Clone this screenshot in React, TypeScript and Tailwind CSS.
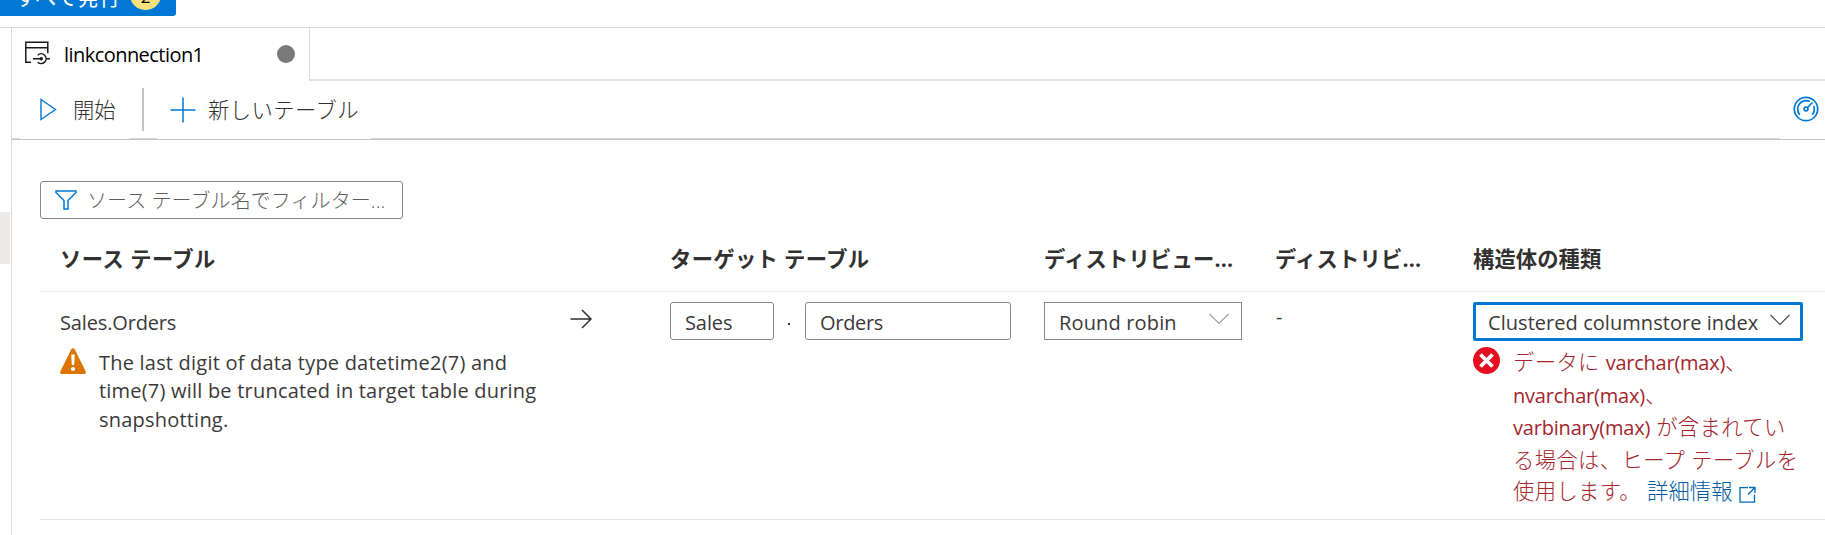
import React from 'react';

const Chevron = ({ className }: { className: string }) => (
  <svg viewBox="0 0 20 12" className={className} fill="none" stroke="currentColor" strokeWidth="1.1">
    <path d="M0.5 1 L10 10.5 L19.5 1" />
  </svg>
);

export default function App() {
  return (
    <div className="flex h-[535px] w-[1825px] flex-col overflow-hidden bg-white font-['Open_Sans','Noto_Sans_CJK_JP',sans-serif] text-[21.3px] text-[#323130]">
      <div className="flex h-[28px] shrink-0 items-end border-b border-[#d9d9d9] pb-[11px]">
        <div className="flex h-[43px] w-[176px] shrink-0 items-center rounded-br-[3px] bg-[#0078d4] pl-[15px] text-white">
          <span className="w-[115px] whitespace-nowrap pt-[5px] text-[21.3px] leading-[30px] tracking-[0.3px]">すべて発行</span>
          <span className="flex h-[30px] w-[31px] items-center justify-center rounded-full bg-[#f9e27d] pt-[4px] text-[17px] text-black">2</span>
        </div>
      </div>
      <div className="flex min-h-0 flex-1">
        <div className="w-[10px] shrink-0 pt-[184px]">
          <div className="h-[52px] bg-[#ebeae9]" />
        </div>
        <div className="ml-[1px] flex min-w-0 flex-1 flex-col border-l border-[#d9d9d9]">
          <div className="flex h-[53px] shrink-0">
            <div className="flex w-[298px] shrink-0 items-center border-r border-[#dcdcdc] pl-[13px]">
              <svg className="mb-[3px]" width="25" height="24" viewBox="0 0 25 24" fill="none" stroke="#1b1a19" strokeWidth="1.5">
                <path d="M6 21.300H.8V1.200h22v11M.8 6.700h22" />
                <path d="M8 17.700h8M12.700 14.200a4.900 4.900 0 1 1 0 7M21 17.700h4" />
                <circle cx="16.2" cy="17.7" r="1.8" fill="#1b1a19" stroke="none" />
              </svg>
              <span className="ml-[14px] w-[213px] whitespace-nowrap pt-[1px] text-[20px] font-medium tracking-[-0.55px] text-black">linkconnection1</span>
              <span className="mb-[1px] size-[18px] rounded-full bg-[#7a7a7a]" />
            </div>
            <div className="flex-1 border-b-2 border-[#e1e1e1]" />
          </div>
          <div className="flex h-[57px] shrink-0 items-center">
            <svg className="ml-[28px]" width="17" height="23" viewBox="0 0 17 23" fill="none" stroke="#0078d4" strokeWidth="1.4">
              <path d="M1 1.500 L15.500 11.500 L1 21.500Z" />
            </svg>
            <span className="ml-[16px] w-[69px] whitespace-nowrap pt-[1px] font-light">開始</span>
            <span className="mb-[1px] h-[43px] w-[2px] bg-[#c3c3c3]" />
            <svg className="ml-[26px]" width="26" height="26" viewBox="0 0 26 26" fill="none" stroke="#0078d4" strokeWidth="1.5">
              <path d="M13 .5v25M.5 13h25" />
            </svg>
            <span className="ml-[12px] flex-1 whitespace-nowrap pt-[1px] font-light tracking-[0.45px]">新しいテーブル</span>
            <svg className="mb-[1px] mr-[6px]" width="26" height="26" viewBox="0 0 26 26" fill="none" stroke="#0078d4" strokeWidth="1.7">
              <circle cx="13" cy="13" r="11.7" />
              <path d="M6.800 18.600a8.300 8.300 0 0 1 9.900-13M20.700 10a8.300 8.300 0 0 1-1.500 8.600M14.500 11.500l5-5" />
              <circle cx="13" cy="13" r="1.9" />
            </svg>
          </div>
          <div className="flex h-[2px] shrink-0 border-b border-[#c3c3c3]">
            <span className="w-[8px] bg-[#d6d6d6]" />
            <span className="ml-[109px] w-[28px] bg-[#d6d6d6]" />
            <span className="ml-[214px] mr-[45px] flex-1 bg-[#d6d6d6]" />
          </div>
          <div className="flex-1 pl-[28px] pt-[41px]">
            <div className="flex h-[38px] w-[363px] items-center rounded-[3px] border border-[#8a8886] pl-[14px]">
              <svg width="22" height="20" viewBox="0 0 22 20" fill="none" stroke="#0078d4" strokeWidth="1.5">
                <path d="M1 1h20v1.500l-8 8V19H9v-8.500L1 2.500Z" />
              </svg>
              <span className="ml-[10px] whitespace-nowrap pt-[2px] text-[20px] font-light tracking-[0.08px] text-[#605e5c]">ソース テーブル名でフィルター...</span>
            </div>
            <div className="grid h-[73px] grid-cols-[610px_374px_231px_198px_1fr] items-center border-b border-[#edebe9] pl-[20px] pt-[8px] font-bold whitespace-nowrap">
              <span className="tracking-[0.45px]">ソース テーブル</span>
              <span className="tracking-[0.35px]">ターゲット テーブル</span>
              <span className="tracking-[0.2px]">ディストリビュー...</span>
              <span className="tracking-[0.2px]">ディストリビ...</span>
              <span className="tracking-[0.1px]">構造体の種類</span>
            </div>
            <div className="grid h-[228px] grid-cols-[510px_100px_374px_231px_198px_1fr] border-b border-[#e5e5e5] pl-[20px] text-[20px] text-[#3b3a39]">
              <div className="pt-[17px]">
                <div className="leading-[28px] tracking-[-0.15px]">Sales.Orders</div>
                <div className="mt-[11px] flex">
                  <svg width="26" height="26" viewBox="0 0 26 26" className="mr-[13px] shrink-0">
                    <path d="M11.300 1.200Q13-.8 14.700 1.200L25.700 23.500Q26.400 26 24 26H2Q-.4 26 .3 23.500Z" fill="#db7500" />
                    <path d="M11.200 6.500h3.600l-.6 10.500h-2.400Z" fill="#fff" />
                    <circle cx="13" cy="21" r="2.100" fill="#fff" />
                  </svg>
                  <div className="whitespace-nowrap pt-[1px] leading-[28.3px] tracking-[0.21px]">
                    The last digit of data type datetime2(7) and<br />
                    time(7) will be truncated in target table during<br />
                    snapshotting.
                  </div>
                </div>
              </div>
              <svg className="mt-[17px]" width="23" height="20" viewBox="0 0 23 20" fill="none" stroke="#323130" strokeWidth="1.5">
                <path d="M.5 10h20.500M12 1l9 9-9 9" />
              </svg>
              <div className="flex pt-[10px]">
                <div className="flex h-[38px] w-[104px] items-center rounded-[3px] border border-[#8a8886] pl-[14px] pt-[3px] tracking-[-0.1px]">Sales</div>
                <span className="flex w-[31px] justify-center pr-[1px] pt-[21px]"><i className="size-[2px] bg-[#323130]" /></span>
                <div className="flex h-[38px] w-[206px] items-center rounded-[3px] border border-[#8a8886] pl-[14px] pt-[3px] tracking-[-0.3px]">Orders</div>
              </div>
              <div className="pt-[10px]">
                <div className="flex h-[38px] w-[198px] items-center border border-[#8a8886] pl-[14px] pt-[3px]">
                  <span className="w-[150px] whitespace-nowrap tracking-[0.15px]">Round robin</span>
                  <Chevron className="mb-[7px] h-[12px] w-[20px] text-[#a19f9d]" />
                </div>
              </div>
              <div className="pl-[1px] pt-[10px] leading-[30px]">-</div>
              <div className="pt-[10px]">
                <div className="flex h-[39px] w-[330px] items-center rounded-[2px] border-[3px] border-[#0078d4] pl-[12px] pt-[2px]">
                  <span className="w-[282px] whitespace-nowrap tracking-[0.05px]">Clustered columnstore index</span>
                  <Chevron className="mb-[5px] h-[12px] w-[20px] text-[#484644]" />
                </div>
                <div className="mt-[5px] flex">
                  <svg width="27" height="27" viewBox="0 0 27 27" className="mr-[13px] mt-[1px] shrink-0">
                    <circle cx="13.500" cy="13.500" r="13.500" fill="#e50f20" />
                    <path d="M7.500 7.500l12 12M19.500 7.500l-12 12" stroke="#fff" strokeWidth="3.800" />
                  </svg>
                  <div className="whitespace-nowrap text-[21.3px] font-light leading-[31.6px] tracking-[0.4px] text-[#a4262c]">
                    データに <span className="text-[20px] font-normal tracking-[-0.25px]">varchar(max)</span>、<br />
                    <span className="text-[20px] font-normal tracking-[-0.2px]">nvarchar(max)</span>、<br />
                    <span className="text-[20px] font-normal tracking-[-0.2px]">varbinary(max)</span> が含まれてい<br />
                    る場合は、ヒープ テーブルを<br />
                    使用します。 <a className="tracking-[0.1px] text-[#005a9e]">詳細情報</a>
                    <svg className="ml-[6px] inline-block align-[-4px]" width="17" height="17" viewBox="0 0 17 17" fill="none" stroke="#0069b8" strokeWidth="1.3">
                      <path d="M9 1.700H1v14.500h14.500V8.500M10 1.500H16V7M16 1.500L9 8.500" />
                    </svg>
                  </div>
                </div>
              </div>
            </div>
          </div>
        </div>
      </div>
    </div>
  );
}
